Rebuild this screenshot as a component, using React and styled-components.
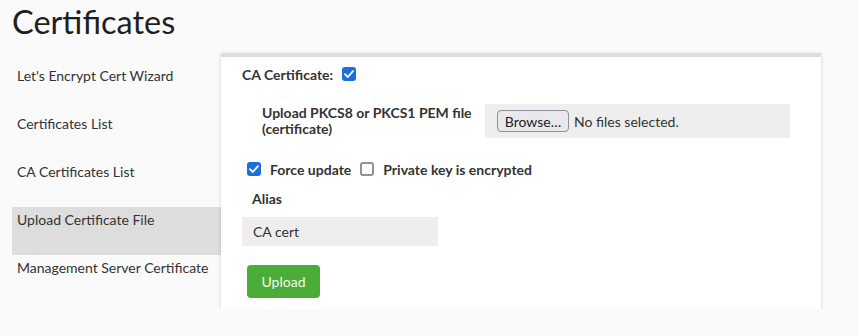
import React, { useState } from "react";
import styled, { createGlobalStyle } from "styled-components";

const GlobalStyle = createGlobalStyle`
  body {
    margin: 0;
    background: #fafafa;
    font-family: Lato, "Noto Sans", sans-serif;
    color: #333;
  }
`;

const Page = styled.div`
  padding: 0 12px;
`;

const Title = styled.h1`
  font-size: 32.5px;
  font-weight: 400;
  color: #1f1f1f;
  margin: 0;
  padding-top: 3px;
  line-height: 38px;
  height: 50px;
`;

const Layout = styled.div`
  display: flex;
  align-items: flex-start;
`;

const Sidebar = styled.nav`
  width: 209px;
  margin-top: 10px;
  display: flex;
  flex-direction: column;
`;

const NavItem = styled.a`
  display: block;
  height: 48px;
  box-sizing: border-box;
  padding: 4px 5px 0;
  font-size: 14px;
  line-height: 17px;
  color: #333;
  cursor: pointer;
  background: ${(props) => (props.active ? "#dddddd" : "transparent")};
`;

const Panel = styled.section`
  width: 600px;
  box-sizing: border-box;
  background: #fff;
  border-top: 4px solid #dddddd;
  box-shadow: 0 1px 4px rgba(0, 0, 0, 0.16);
  padding: 7px 30px 11px 21px;
  display: flex;
  flex-direction: column;
  align-items: flex-start;
`;

const Row = styled.label`
  display: flex;
  align-items: center;
  height: 20px;
  font-size: 14px;
  font-weight: 700;
  color: #333;
  gap: 9px;
`;

const FileRow = styled.div`
  display: flex;
  align-items: center;
  margin-top: 20px;
  padding-left: 20px;
`;

const FileLabel = styled.div`
  width: 223px;
  font-size: 14px;
  font-weight: 700;
  line-height: 16px;
  color: #333;
`;

const FileBox = styled.div`
  width: 305px;
  height: 34px;
  box-sizing: border-box;
  background: #eeeeee;
  padding: 6px 12px;
  display: flex;
  align-items: center;
  gap: 5px;
  font-size: 14px;
  color: #333;
`;

const BrowseButton = styled.button`
  height: 22px;
  width: 72px;
  padding: 0;
  border: 1px solid #8f8f9d;
  border-radius: 4px;
  background: #e9e9ed;
  font-family: Lato, "Noto Sans", sans-serif;
  font-size: 14px;
  color: #222;
`;

const Box = styled.span`
  width: 14px;
  height: 14px;
  box-sizing: border-box;
  border-radius: 3px;
  display: inline-flex;
  align-items: center;
  justify-content: center;
  background: ${(props) => (props.checked ? "#1b6fe0" : "#fff")};
  border: ${(props) => (props.checked ? "none" : "2px solid #8f8f9d")};
  cursor: pointer;
`;

const CheckGroup = styled.div`
  display: flex;
  align-items: center;
  margin-top: 21px;
  margin-left: 5px;
  gap: 9px;
`;

const AliasLabel = styled.div`
  font-size: 14px;
  font-weight: 700;
  line-height: 20px;
  margin-top: 10px;
  margin-left: 10px;
  color: #333;
`;

const AliasInput = styled.input`
  width: 196px;
  height: 29px;
  box-sizing: border-box;
  margin-top: 8px;
  border: none;
  background: #eeeeee;
  padding: 0 11px;
  font-family: Lato, "Noto Sans", sans-serif;
  font-size: 14px;
  color: #333;
  outline: none;
`;

const UploadButton = styled.button`
  margin-top: 19px;
  margin-left: 5px;
  width: 73px;
  height: 33px;
  border: none;
  border-radius: 4px;
  background: #4cac38;
  color: #f4f9e8;
  font-family: Lato, "Noto Sans", sans-serif;
  font-size: 14px;
  cursor: pointer;
`;

const Checkbox = ({ checked, onToggle }) => (
  <Box checked={checked} onClick={onToggle}>
    {checked && (
      <svg width="10" height="8" viewBox="0 0 10 8">
        <path
          d="M1 4.2 L3.8 7 L9 1.2"
          fill="none"
          stroke="#fff"
          strokeWidth="1.8"
          strokeLinecap="round"
          strokeLinejoin="round"
        />
      </svg>
    )}
  </Box>
);

const navItems = [
  "Let's Encrypt Cert Wizard",
  "Certificates List",
  "CA Certificates List",
  "Upload Certificate File",
  "Management Server Certificate",
];

const App = () => {
  const [ca, setCa] = useState(true);
  const [force, setForce] = useState(true);
  const [encrypted, setEncrypted] = useState(false);
  const [alias, setAlias] = useState("CA cert");

  return (
    <Page>
      <GlobalStyle />
      <Title>Certificates</Title>
      <Layout>
        <Sidebar>
          {navItems.map((item) => (
            <NavItem key={item} active={item === "Upload Certificate File"}>
              {item}
            </NavItem>
          ))}
        </Sidebar>
        <Panel>
          <Row>
            CA Certificate:
            <Checkbox checked={ca} onToggle={() => setCa(!ca)} />
          </Row>
          <FileRow>
            <FileLabel>
              Upload PKCS8 or PKCS1 PEM file
              <br />
              (certificate)
            </FileLabel>
            <FileBox>
              <BrowseButton>Browse…</BrowseButton>
              <span>No files selected.</span>
            </FileBox>
          </FileRow>
          <CheckGroup>
            <Checkbox checked={force} onToggle={() => setForce(!force)} />
            <Row>Force update</Row>
            <Checkbox checked={encrypted} onToggle={() => setEncrypted(!encrypted)} />
            <Row>Private key is encrypted</Row>
          </CheckGroup>
          <AliasLabel>Alias</AliasLabel>
          <AliasInput value={alias} onChange={(e) => setAlias(e.target.value)} />
          <UploadButton>Upload</UploadButton>
        </Panel>
      </Layout>
    </Page>
  );
};

export default App;
